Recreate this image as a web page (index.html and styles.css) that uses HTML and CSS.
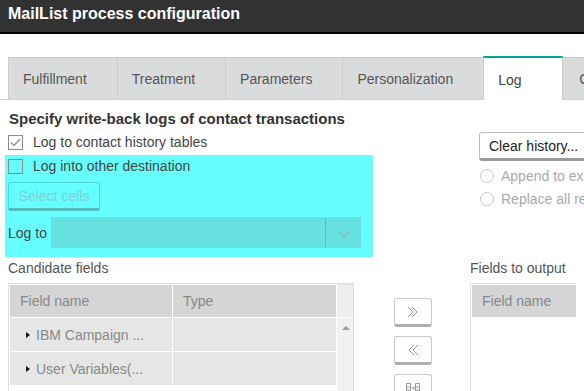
FILE: index.html
```html
<!DOCTYPE html>
<html lang="en">
<head>
    <meta charset="UTF-8">
    <meta name="viewport" content="width=device-width, initial-scale=1.0">
    <link rel="stylesheet" href="styles.css">
    <title>MailList process configuration</title>
</head>
<body>
    <header class="title-bar">
        <h1>MailList process configuration</h1>
    </header>

    <nav class="tabs">
        <div class="tab">Fulfillment</div>
        <div class="tab">Treatment</div>
        <div class="tab">Parameters</div>
        <div class="tab">Personalization</div>
        <div class="tab active">Log</div>
        <div class="tab">Cells</div>
    </nav>

    <main class="panel">
        <h2>Specify write-back logs of contact transactions</h2>

        <div class="log-options">
            <div class="left-col">
                <label class="check-row first">
                    <span class="checkbox">
                        <svg width="11" height="9" viewBox="0 0 11 9"><path d="M1 4.5 L4 7.5 L10 1" fill="none" stroke="#888" stroke-width="1.2"/></svg>
                    </span>
                    Log to contact history tables
                </label>
                <div class="highlight">
                    <label class="check-row">
                        <span class="checkbox"></span>
                        Log into other destination
                    </label>
                    <button class="btn select-btn" disabled>Select cells</button>
                    <div class="log-to">
                        <span>Log to</span>
                        <div class="select">
                            <span class="select-arrow">
                                <svg width="14" height="8" viewBox="0 0 14 8"><path d="M1 1 L7 7 L13 1" fill="none" stroke="#8aa" stroke-width="1"/></svg>
                            </span>
                        </div>
                    </div>
                </div>
            </div>

            <div class="right-col">
                <button class="btn clear-btn">Clear history...</button>
                <label class="radio-row"><span class="radio"></span>Append to existing data</label>
                <label class="radio-row"><span class="radio"></span>Replace all records</label>
            </div>
        </div>

        <div class="fields">
            <div class="candidate">
                <div class="list-label">Candidate fields</div>
                <div class="list-box">
                    <div class="grid">
                        <div class="th">Field name</div>
                        <div class="th">Type</div>
                        <div class="td"><span class="caret"></span>IBM Campaign ...</div>
                        <div class="td"></div>
                        <div class="td"><span class="caret"></span>User Variables(...</div>
                        <div class="td"></div>
                    </div>
                    <div class="scrollbar">
                        <div class="scroll-head"></div>
                        <div class="scroll-up"></div>
                    </div>
                </div>
            </div>

            <div class="mover">
                <button class="btn move-btn">
                    <svg width="14" height="14" viewBox="0 0 14 14"><path d="M2 2 L7 7 L2 12 M6 2 L11 7 L6 12" fill="none" stroke="#999" stroke-width="1"/></svg>
                </button>
                <button class="btn move-btn">
                    <svg width="14" height="14" viewBox="0 0 14 14"><path d="M12 2 L7 7 L12 12 M8 2 L3 7 L8 12" fill="none" stroke="#999" stroke-width="1"/></svg>
                </button>
                <button class="btn move-btn">
                    <svg width="16" height="12" viewBox="0 0 16 12"><path d="M1.5 1.5 H5.5 V11 H1.5 Z M1.5 5 H5.5 M1.5 8 H5.5 M10.5 1.5 H14.5 V11 H10.5 Z M10.5 5 H14.5 M10.5 8 H14.5 M6.5 6 H9.5 M8 4.5 L9.5 6 L8 7.5" fill="none" stroke="#999" stroke-width="1"/></svg>
                </button>
            </div>

            <div class="output">
                <div class="list-label">Fields to output</div>
                <div class="list-box output-box">
                    <div class="th">Field name</div>
                </div>
            </div>
        </div>
    </main>
</body>
</html>
```

FILE: styles.css
```css
body {
    font-family: "Liberation Sans", Arial, sans-serif;
    margin: 0;
    padding: 0;
    background-color: #fff;
    color: #444;
    font-size: 14px;
    width: 584px;
    height: 391px;
    overflow: hidden;
    white-space: nowrap;
}

.title-bar {
    background-color: #323232;
    height: 32px;
    border-bottom: 2px solid #000;
}

.title-bar h1 {
    margin: 0;
    padding-left: 8px;
    color: #fff;
    font-size: 16px;
    line-height: 27px;
    font-weight: bold;
}

.tabs {
    display: flex;
    align-items: flex-end;
    padding: 22px 0 0 8px;
    border-bottom: 1px solid #cfcfcf;
}

.tab {
    box-sizing: border-box;
    height: 42px;
    min-width: 80px;
    line-height: 43px;
    padding: 0 30px 0 14px;
    background-color: #dadbdc;
    border-top: 1px solid #cbcbcb;
    border-left: 1px solid #cbcbcb;
    color: #555;
    flex-shrink: 0;
}

.tab.active {
    height: 44px;
    line-height: 44px;
    margin-bottom: -1px;
    background-color: #fff;
    border-top: 2px solid #00a69c;
    border-right: 1px solid #cbcbcb;
    color: #444;
}

.tab.active + .tab {
    border-left: none;
    padding-left: 16px;
}

.panel {
    padding: 0 8px;
}

.panel h2 {
    margin: 10px 0 0 1px;
    font-size: 15px;
    line-height: 18px;
    color: #333;
}

.log-options {
    display: flex;
}

.left-col {
    width: 368px;
    margin-left: -3px;
    flex-shrink: 0;
}

.check-row {
    display: flex;
    align-items: center;
    gap: 10px;
    height: 22px;
    padding-left: 3px;
}

.check-row.first {
    margin-top: 3px;
}

.checkbox {
    box-sizing: border-box;
    width: 15px;
    height: 15px;
    border: 1px solid #8a8a8a;
    display: flex;
    align-items: center;
    justify-content: center;
}

.highlight {
    background-color: #66ffff;
    margin-top: 2px;
    padding: 0 12px 9px 3px;
}

.highlight .check-row {
    padding-left: 0;
}

.btn {
    font-family: "Liberation Sans", Arial, sans-serif;
    font-size: 14px;
    background-color: #fff;
    border: 1px solid #bdbdbd;
    border-bottom: 3px solid #9a9a9a;
    border-radius: 3px;
    box-sizing: border-box;
    height: 29px;
    padding: 0 9px;
    color: #222;
}

.select-btn {
    display: block;
    margin-top: 5px;
    width: 92px;
    background-color: transparent;
    border-color: #4fd6d6;
    border-bottom-color: #52bcbc;
    color: #7fcfcf;
}

.log-to {
    display: flex;
    align-items: center;
    gap: 4px;
    margin-top: 6px;
}

.select {
    flex: 1;
    height: 31px;
    background-color: #66e0e0;
    display: flex;
    justify-content: flex-end;
}

.select-arrow {
    width: 35px;
    border-left: 1px solid #55bcbc;
    margin: 1px 0;
    display: flex;
    align-items: center;
    justify-content: center;
    padding-top: 3px;
}

.right-col {
    margin-left: 106px;
    padding-top: 4px;
}

.clear-btn {
    display: block;
    width: 130px;
    text-align: left;
}

.radio-row {
    display: flex;
    align-items: center;
    gap: 7px;
    height: 21px;
    margin-top: 2px;
    color: #aaa;
}

.radio-row:first-of-type {
    margin-top: 4px;
}

.radio {
    box-sizing: border-box;
    width: 14px;
    height: 14px;
    border: 1px solid #c8c8c8;
    border-radius: 50%;
    margin-left: 1px;
}

.fields {
    display: flex;
    margin-top: 2px;
}

.list-label {
    line-height: 18px;
    color: #555;
    margin-bottom: 6px;
}

.list-box {
    display: flex;
    height: 120px;
    border: 1px solid #dedede;
    box-sizing: border-box;
    padding: 1px 0 0 1px;
}

.candidate {
    width: 346px;
    flex-shrink: 0;
}

.grid {
    display: grid;
    grid-template-columns: 162px 163px;
    grid-template-rows: 32px 33px 33px;
    gap: 1px;
    align-content: start;
    background-color: #fff;
}

.th {
    background-color: #d5d5d5;
    color: #888;
    line-height: 32px;
    padding-left: 10px;
}

.td {
    background-color: #e6e6e6;
    color: #888;
    display: flex;
    align-items: center;
    padding-left: 16px;
}

.caret {
    width: 0;
    height: 0;
    border-top: 3px solid transparent;
    border-bottom: 3px solid transparent;
    border-left: 4px solid #111;
    margin-right: 6px;
}

.scrollbar {
    width: 17px;
    margin-left: 1px;
    background-color: #f1f1f1;
    margin-top: -1px;
}

.scroll-head {
    height: 32px;
    background-color: #eeeeef;
    border-bottom: 1px solid #fff;
    border-top: 1px solid #e4e4e4;
}

.scroll-up {
    width: 0;
    height: 0;
    margin: 8px 0 0 5px;
    border-left: 4px solid transparent;
    border-right: 4px solid transparent;
    border-bottom: 4px solid #9a9a9a;
}

.mover {
    display: flex;
    flex-direction: column;
    gap: 9px;
    margin: 39px 0 0 40px;
    width: 38px;
    flex-shrink: 0;
}

.move-btn {
    width: 38px;
    border-color: #c9c9c9;
    border-bottom-color: #b0b0b0;
    padding: 0;
    display: flex;
    align-items: center;
    justify-content: center;
}

.output {
    margin-left: 38px;
    flex: 1;
}

.output-box {
    display: block;
    border-right: none;
    padding: 0 0 0 1px;
}

.output-box .th {
    height: 32px;
    margin-top: 1px;
}
```
